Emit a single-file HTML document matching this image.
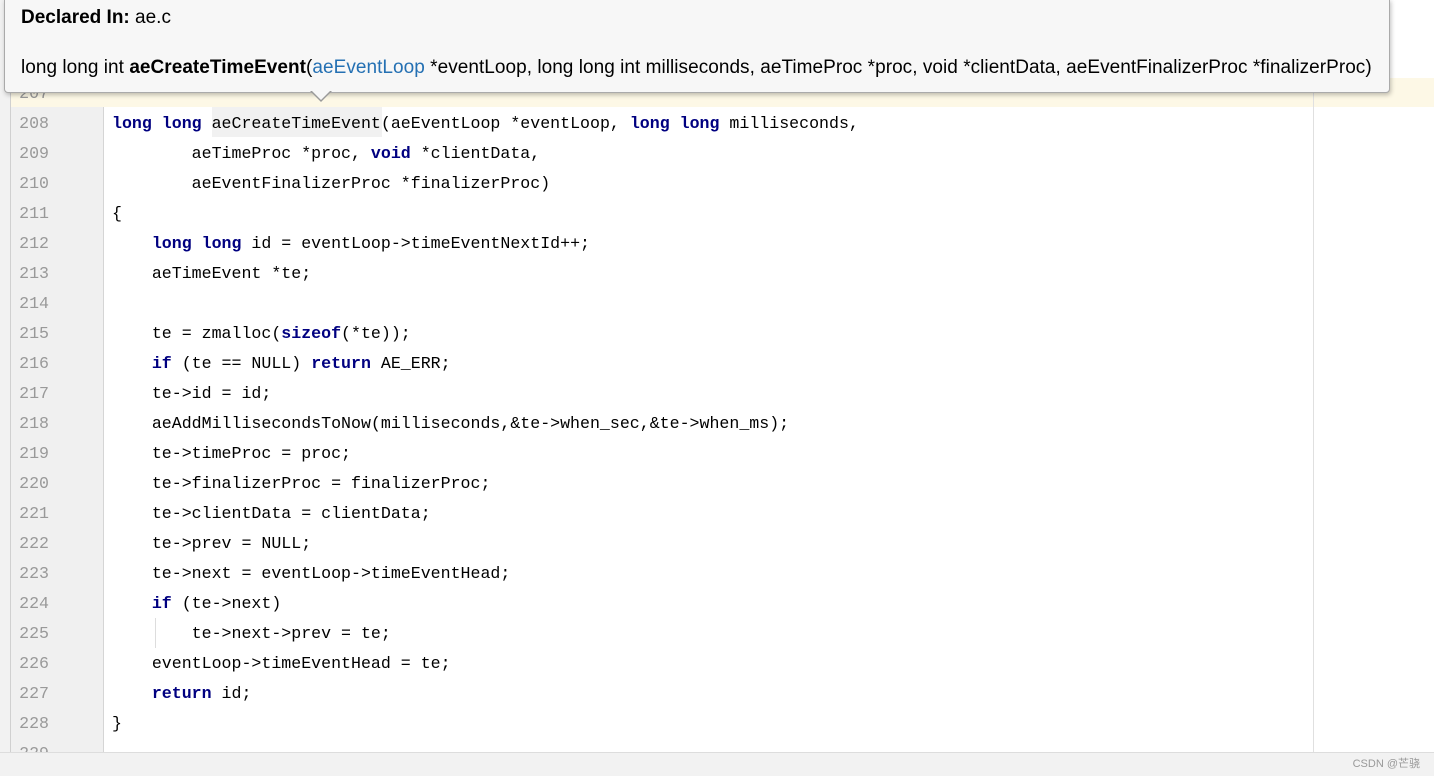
<!DOCTYPE html>
<html><head><style>
body{margin:0;width:1434px;height:775px;overflow:hidden;background:#fff;position:relative;font-family:"Liberation Mono",monospace}
.side{position:absolute;left:0;top:0;width:10px;height:775px;background:#f2f2f2;border-right:1px solid #d0d0d0}
.gut{position:absolute;left:11px;top:0;width:92px;height:752px;background:#f0f0f0;border-right:1px solid #d5d5d5}
.hl{position:absolute;left:11px;top:78px;width:1423px;height:29px;background:#fdf8e6}
.rm{position:absolute;left:1313px;top:78px;width:1px;height:674px;background:#e0e0e0}
.bot{position:absolute;left:0;top:752px;width:1434px;height:23px;background:#f2f2f2;border-top:1px solid #ddd}
.ln{position:absolute;left:11px;width:38px;text-align:right;color:#999;font-size:16.6px;line-height:30px}
.cd{position:absolute;left:112px;font-size:16.6px;line-height:30px;color:#000;white-space:pre}
b{color:#000080}
.tip{position:absolute;left:4px;top:-1px;width:1384px;height:92px;background:#f7f7f7;border:1px solid #aaa;border-radius:0 0 4px 4px;box-shadow:1px 2px 5px rgba(0,0,0,.25);font-family:"Liberation Sans",sans-serif;font-size:19px;color:#000}
.arr{position:absolute;left:310px;top:91px;width:0;height:0;border-left:11px solid transparent;border-right:11px solid transparent;border-top:11px solid #999}
.arr2{position:absolute;left:311px;top:90px;width:0;height:0;border-left:10px solid transparent;border-right:10px solid transparent;border-top:10px solid #f7f7f7}
</style></head><body>
<div class="side"></div>
<div class="gut"></div>
<div class="hl"></div>
<div style="position:absolute;left:212px;top:107px;width:170px;height:30px;background:#f1f1f1"></div>
<div class="rm"></div>
<div style="position:absolute;left:155px;top:618px;width:1px;height:30px;background:#ddd"></div>
<div class="ln" style="top:79px">207</div>
<div class="ln" style="top:109px">208<br>209<br>210<br>211<br>212<br>213<br>214<br>215<br>216<br>217<br>218<br>219<br>220<br>221<br>222<br>223<br>224<br>225<br>226<br>227<br>228<br>229</div>
<div class="cd" style="top:109px"><b>long long</b> aeCreateTimeEvent(aeEventLoop *eventLoop, <b>long long</b> milliseconds,
        aeTimeProc *proc, <b>void</b> *clientData,
        aeEventFinalizerProc *finalizerProc)
{
    <b>long long</b> id = eventLoop->timeEventNextId++;
    aeTimeEvent *te;

    te = zmalloc(<b>sizeof</b>(*te));
    <b>if</b> (te == NULL) <b>return</b> AE_ERR;
    te->id = id;
    aeAddMillisecondsToNow(milliseconds,&amp;te->when_sec,&amp;te->when_ms);
    te->timeProc = proc;
    te->finalizerProc = finalizerProc;
    te->clientData = clientData;
    te->prev = NULL;
    te->next = eventLoop->timeEventHead;
    <b>if</b> (te->next)
        te->next->prev = te;
    eventLoop->timeEventHead = te;
    <b>return</b> id;
}</div>
<div class="bot"><span style="position:absolute;right:14px;top:2px;font-family:'Liberation Sans','Noto Sans CJK SC',sans-serif;font-size:11px;color:#999">CSDN @芒骁</span></div>
<div class="tip">
<div style="position:absolute;left:16px;top:7px"><span style="font-weight:bold">Declared In:</span> ae.c</div>
<div style="position:absolute;left:16px;top:57px;white-space:nowrap;letter-spacing:0.04px">long long int <span style="font-weight:bold">aeCreateTimeEvent</span>(<span style="color:#2470b3">aeEventLoop</span> *eventLoop, long long int milliseconds, aeTimeProc *proc, void *clientData, aeEventFinalizerProc *finalizerProc)</div>
</div>
<div class="arr"></div><div class="arr2"></div>
</body></html>
